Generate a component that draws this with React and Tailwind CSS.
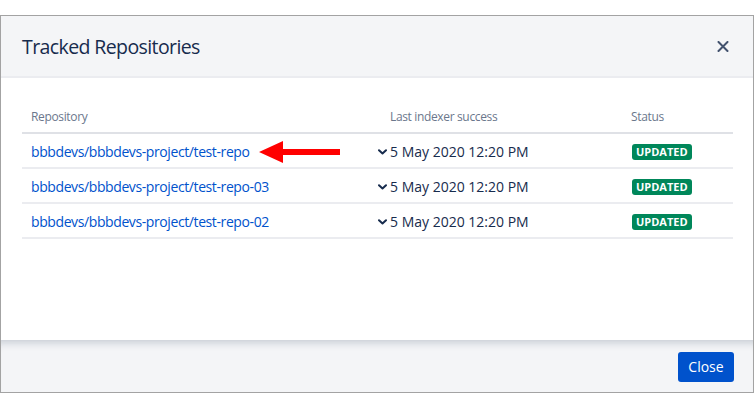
import React from "react";

const rows = [
  "bbbdevs/bbbdevs-project/test-repo",
  "bbbdevs/bbbdevs-project/test-repo-03",
  "bbbdevs/bbbdevs-project/test-repo-02",
];

function Chevron() {
  return (
    <svg width="9" height="6" viewBox="0 0 9 6" className="shrink-0">
      <path d="M1 1.2 L4.5 4.5 L8 1.2" fill="none" stroke="#172b4d" strokeWidth="2" strokeLinecap="round" strokeLinejoin="round" />
    </svg>
  );
}

export default function App() {
  return (
    <div className="w-[754px] h-[408px] bg-white pt-[15px]" style={{ fontFamily: "'Open Sans', 'Liberation Sans', sans-serif" }}>
      <div className="w-[754px] h-[378px] border border-[#a3a3a3] flex flex-col bg-white">
        <div className="h-[62px] bg-[#f4f5f7] border-b-[2px] border-[#ebecf0] flex items-center justify-between pl-[21px] pr-[24px] shrink-0">
          <div className="text-[19.5px] text-[#172b4d] tracking-[-0.6px] pt-[2px]">Tracked Repositories</div>
          <svg width="12" height="11" viewBox="0 0 12 11">
            <path d="M1.5 1 L10.5 10 M10.5 1 L1.5 10" stroke="#42526e" strokeWidth="2" strokeLinecap="round" />
          </svg>
        </div>
        <div className="flex-1 px-[21px] pt-[28px]">
          <div className="w-[711px]">
            <div className="flex h-[28px] pt-[2px] border-b-[2px] border-[#dfe1e6] text-[12px] text-[#6b778c] items-start tracking-[-0.35px]">
              <div className="w-[359px] pl-[9px]">Repository</div>
              <div className="w-[241px] pl-[9px]">Last indexer success</div>
              <div className="flex-1 pl-[9px]">Status</div>
            </div>
            {rows.map((r, i) => (
              <div key={r} className="flex h-[35px] border-b-[2px] border-[#ebecf0] items-center text-[14px] pt-[2px]">
                <div className="w-[359px] pl-[9px] flex items-center">
                  <span className="text-[#0052cc] tracking-[-0.4px]">{r}</span>
                  {i === 0 && (
                    <svg width="81" height="22" viewBox="0 0 81 22" className="ml-[9px]">
                      <polygon points="0,11 24,0 24,8 81,8 81,14 24,14 24,22" fill="#ff0000" />
                    </svg>
                  )}
                </div>
                <div className="w-[241px] pl-[9px] flex items-center">
                  <span className="-ml-[12px] mr-[3px] flex"><Chevron /></span>
                  <span className="text-[#172b4d]">5 May 2020 12:20 PM</span>
                </div>
                <div className="flex-1 pl-[10px] flex items-center">
                  <span className="bg-[#00875a] text-white text-[11px] font-bold rounded-[3px] h-[16px] px-[4px] flex items-center leading-none">UPDATED</span>
                </div>
              </div>
            ))}
          </div>
        </div>
        <div className="h-[52px] bg-[#f4f5f7] shrink-0 flex items-center justify-end pr-[19px] shadow-[inset_0_10px_10px_-8px_rgba(9,30,66,0.22)]">
          <button className="w-[56px] h-[30px] bg-[#0052cc] rounded-[3px] text-white text-[14px] mt-[1px]">Close</button>
        </div>
      </div>
    </div>
  );
}
